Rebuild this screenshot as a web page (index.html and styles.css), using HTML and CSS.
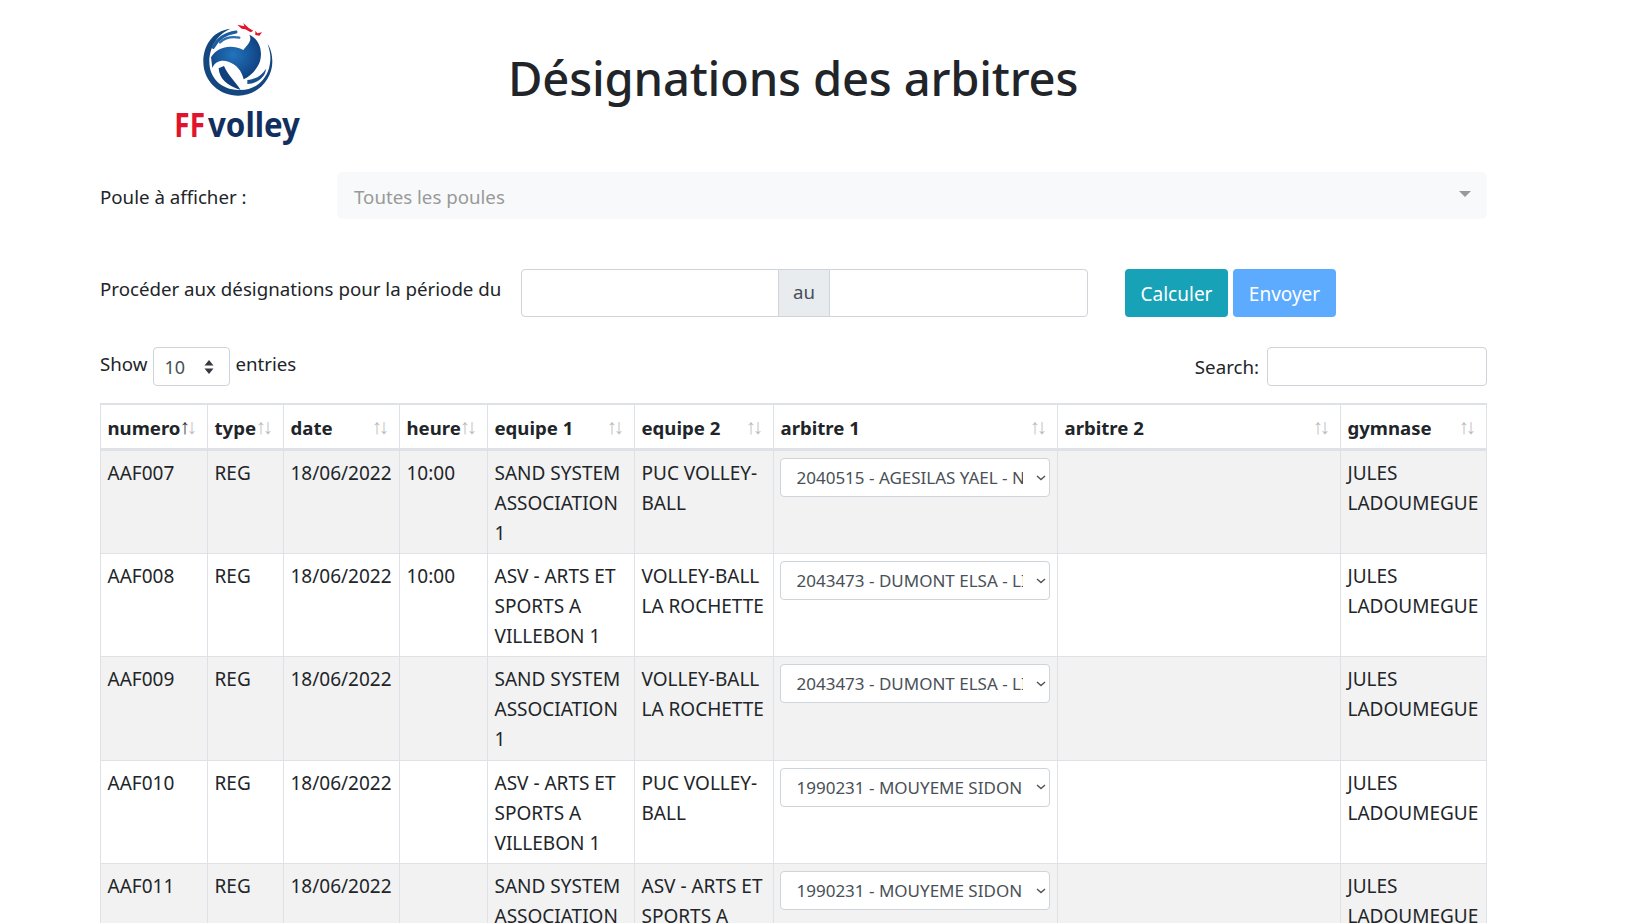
FILE: index.html
```html
<!DOCTYPE html>
<html lang="fr">
<head>
<meta charset="utf-8">
<title>Désignations des arbitres</title>
<link rel="stylesheet" href="styles.css">
</head>
<body>
<main class="page">
  <header class="head">
    <svg class="logo" viewBox="0 0 600 480" width="200" height="160" role="img" aria-label="FFvolley">
      <defs>
        <radialGradient id="ball" cx="45%" cy="45%" r="65%">
          <stop offset="0" stop-color="#2274bd"/>
          <stop offset="1" stop-color="#0d3a78"/>
        </radialGradient>
      </defs>
      <path fill="#14477f" d="M272 86C215 92 190 140 190 185C190 245 240 287 295 287C350 287 397 240 397 185C397 165 392 145 383 132C392 160 394 175 387 205C374 250 335 273 295 270C245 268 208 235 208 185C208 140 235 100 272 86Z"/>
      <path fill="url(#ball)" d="M213 172C235 138 275 133 310 150C325 132 337 122 328 104C357 118 369 150 360 184C352 208 332 227 311 238C305 212 290 194 265 185C245 178 225 184 217 204Z"/>
      <path fill="none" stroke="#1c5c9e" stroke-width="9" stroke-linecap="round" d="M220 142C233 115 260 100 288 96"/>
      <path fill="none" stroke="#2a6fb0" stroke-width="7" stroke-linecap="round" d="M240 127C255 113 275 109 298 113"/>
      <path fill="#0f3f7c" d="M236 205C238 237 262 258 302 270C287 245 266 230 252 198Z"/>
      <path fill="#17508f" d="M322 240C345 238 364 228 378 206C376 232 352 250 322 252Z"/>
      <path fill="#e2132c" d="M292 74L313 79L310 69L326 84L340 92L332 97L316 88L305 86ZM346 92L352 100L366 97L358 107L346 105Z"/>
      <text class="logo-text logo-ff" x="103" y="410" textLength="92" lengthAdjust="spacingAndGlyphs">FF</text>
      <text class="logo-text logo-volley" x="204" y="410" textLength="276" lengthAdjust="spacingAndGlyphs">volley</text>
    </svg>
    <h1 class="title">Désignations des arbitres</h1>
  </header>

  <section class="poule">
    <label class="poule-label">Poule à afficher :</label>
    <div class="poule-select">
      <span>Toutes les poules</span>
      <i class="caret"></i>
    </div>
  </section>

  <section class="periode">
    <span class="periode-label">Procéder aux désignations pour la période du</span>
    <div class="input-group">
      <input class="group-input" type="text" aria-label="début">
      <span class="group-addon">au</span>
      <input class="group-input" type="text" aria-label="fin">
    </div>
    <div class="actions">
      <button class="btn btn-info" type="button">Calculer</button>
      <button class="btn btn-blue" type="button">Envoyer</button>
    </div>
  </section>

  <section class="dt-tools">
    <div class="dt-length">
      <span>Show</span>
      <span class="length-select">10
        <svg class="updown" viewBox="0 0 10 16" width="10" height="16"><path d="M5 1L9.500 6.500H.5ZM5 15L.5 9.500H9.500Z"/></svg>
      </span>
      <span class="length-after">entries</span>
    </div>
    <label class="dt-search">Search: <input class="search-input" type="text"></label>
  </section>

  <table class="grid">
    <colgroup>
      <col class="c-num"><col class="c-type"><col class="c-date"><col class="c-heure"><col class="c-eq1"><col class="c-eq2"><col class="c-arb"><col class="c-arb2"><col class="c-gym">
    </colgroup>
    <thead>
      <tr>
        <th class="sorted">numero</th><th>type</th><th>date</th><th>heure</th><th>equipe 1</th><th>equipe 2</th><th>arbitre 1</th><th>arbitre 2</th><th>gymnase</th>
      </tr>
    </thead>
    <tbody>
      <tr>
        <td>AAF007</td><td>REG</td><td>18/06/2022</td><td>10:00</td>
        <td>SAND SYSTEM ASSOCIATION 1</td><td>PUC VOLLEY-BALL</td>
        <td><select class="arb"><option>2040515 - AGESILAS YAEL - NATIONAL</option></select></td>
        <td></td><td>JULES LADOUMEGUE</td>
      </tr>
      <tr>
        <td>AAF008</td><td>REG</td><td>18/06/2022</td><td>10:00</td>
        <td>ASV - ARTS ET SPORTS A VILLEBON 1</td><td>VOLLEY-BALL LA ROCHETTE</td>
        <td><select class="arb"><option>2043473 - DUMONT ELSA - LIGUE</option></select></td>
        <td></td><td>JULES LADOUMEGUE</td>
      </tr>
      <tr>
        <td>AAF009</td><td>REG</td><td>18/06/2022</td><td></td>
        <td>SAND SYSTEM ASSOCIATION 1</td><td>VOLLEY-BALL LA ROCHETTE</td>
        <td><select class="arb"><option>2043473 - DUMONT ELSA - LIGUE</option></select></td>
        <td></td><td>JULES LADOUMEGUE</td>
      </tr>
      <tr>
        <td>AAF010</td><td>REG</td><td>18/06/2022</td><td></td>
        <td>ASV - ARTS ET SPORTS A VILLEBON 1</td><td>PUC VOLLEY-BALL</td>
        <td><select class="arb"><option>1990231 - MOUYEME SIDON</option></select></td>
        <td></td><td>JULES LADOUMEGUE</td>
      </tr>
      <tr>
        <td>AAF011</td><td>REG</td><td>18/06/2022</td><td></td>
        <td>SAND SYSTEM ASSOCIATION 1</td><td>ASV - ARTS ET SPORTS A VILLEBON 1</td>
        <td><select class="arb"><option>1990231 - MOUYEME SIDON</option></select></td>
        <td></td><td>JULES LADOUMEGUE</td>
      </tr>
    </tbody>
  </table>
</main>
</body>
</html>
```
FILE: styles.css
```css
* { box-sizing: border-box; }
html, body { margin: 0; height: 100%; overflow: hidden; background: #fff; }
body {
  font-family: "Noto Sans", "Open Sans", sans-serif;
  font-size: 18.700px;
  line-height: 30px;
  color: #212529;
}
.page { width: 1387px; margin-left: 100px; }

.head { display: flex; height: 172px; align-items: flex-start; }
.logo { margin-left: 40px; flex: none; }
.logo-text { font-family: "Noto Sans", sans-serif; font-weight: 700; font-size: 100px; }
.logo-ff { fill: #e2132c; }
.logo-volley { fill: #12305f; }
.title {
  margin: 45px 0 0 168px;
  font-size: 47.200px;
  line-height: 66px;
  font-weight: 500;
  letter-spacing: -.2px;
}

.poule { display: flex; height: 47px; }
.poule-label { width: 237px; flex: none; padding-top: 10px; }
.poule-select {
  flex: 1;
  display: flex;
  justify-content: space-between;
  align-items: center;
  padding: 2px 16px 0 17px;
  background: #f8f9fa;
  border-radius: 5px;
  color: #999;
}
.caret {
  width: 0; height: 0;
  border-left: 6px solid transparent;
  border-right: 6px solid transparent;
  border-top: 6px solid #999;
  margin: 0 0 6px;
}

.periode { display: flex; margin-top: 50px; height: 48px; }
.periode-label { width: 421px; flex: none; padding-top: 5px; }
.input-group { display: flex; width: 567px; flex: none; }
.group-input {
  min-width: 0;
  border: 1px solid #ced4da;
  background: #fff;
  outline: 0;
}
.group-input:first-child { width: 258px; flex: none; border-radius: 4px 0 0 4px; }
.group-input:last-child { flex: 1; border-radius: 0 4px 4px 0; }
.group-addon {
  width: 50px;
  flex: none;
  display: flex;
  align-items: center;
  justify-content: center;
  background: #e9ecef;
  border: 1px solid #ced4da;
  border-width: 1px 0;
  color: #495057;
  padding-bottom: 2px;
}
.actions { display: flex; gap: 5px; margin-left: 37px; }
.btn {
  width: 103px;
  border: 0;
  border-radius: 4px;
  color: #fff;
  font: inherit;
  font-size: 19px;
  padding: 2px 0 0;
}
.btn-info { background: #17a2b8; }
.btn-blue { background: #5cabff; }

.dt-tools { display: flex; justify-content: space-between; margin-top: 30px; height: 38px; }
.dt-length { display: flex; gap: 6px; align-items: flex-start; }
.dt-length > span:first-child, .dt-length > span:last-child { margin-top: 2px; }
.length-after { margin-left: -1px; }
.length-select {
  width: 77px;
  height: 39px;
  display: flex;
  align-items: center;
  justify-content: space-between;
  padding: 0 15px 0 10px;
  border: 1px solid #ced4da;
  border-radius: 4px;
  color: #495057;
  font-size: 18px;
}
.updown { fill: #343a40; }
.dt-search { display: flex; gap: 8px; align-items: center; padding-top: 2px; }
.search-input {
  width: 220px;
  height: 39px;
  margin-top: -2px;
  border: 1px solid #ced4da;
  border-radius: 4px;
  outline: 0;
}

.grid {
  width: 1386px;
  margin-top: 18px;
  table-layout: fixed;
  border-collapse: collapse;
  border: 1px solid #dee2e6;
  font-size: 19px;
}
.c-num { width: 107px; }
.c-type { width: 76px; }
.c-date { width: 116px; }
.c-heure { width: 88px; }
.c-eq1 { width: 147px; }
.c-eq2 { width: 139px; }
.c-arb { width: 284px; }
.c-arb2 { width: 283px; }
.c-gym { width: 146px; }

.grid th, .grid td {
  padding: 7px 6px 5px 6.500px;
  border: 1px solid #dee2e6;
  vertical-align: top;
  text-align: left;
}
.grid th {
  position: relative;
  font-size: 18.600px;
  font-weight: 700;
  padding: 8px 0 5px 6.500px;
  border-top: 2px solid #dee2e6;
  border-bottom: 3px solid #dee2e6;
  white-space: nowrap;
}
.grid th::before, .grid th::after {
  position: absolute;
  top: 7px;
  font-family: "Liberation Sans", sans-serif;
  font-size: 21px;
  font-weight: 400;
  opacity: .3;
}
.grid th::before { content: "\2191"; right: 17px; }
.grid th::after { content: "\2193"; right: 10px; }
.grid th.sorted::before { opacity: .9; }
.grid tbody tr { height: 103.400px; }
.grid tbody tr:nth-child(odd) { background: #f2f2f2; }

.arb {
  display: block;
  appearance: none;
  width: 270px;
  height: 39px;
  margin-left: -1px;
  padding: 0 26px 0 16px;
  border: 1px solid #ced4da;
  border-radius: 4px;
  background: #fff url("data:image/svg+xml,%3Csvg xmlns='http://www.w3.org/2000/svg' width='10' height='6'%3E%3Cpath d='M1 1l4 3.500L9 1' fill='none' stroke='%23555' stroke-width='1.500'/%3E%3C/svg%3E") no-repeat right 3px center;
  color: #495057;
  font: inherit;
  font-size: 17px;
  line-height: 37px;
}
```
